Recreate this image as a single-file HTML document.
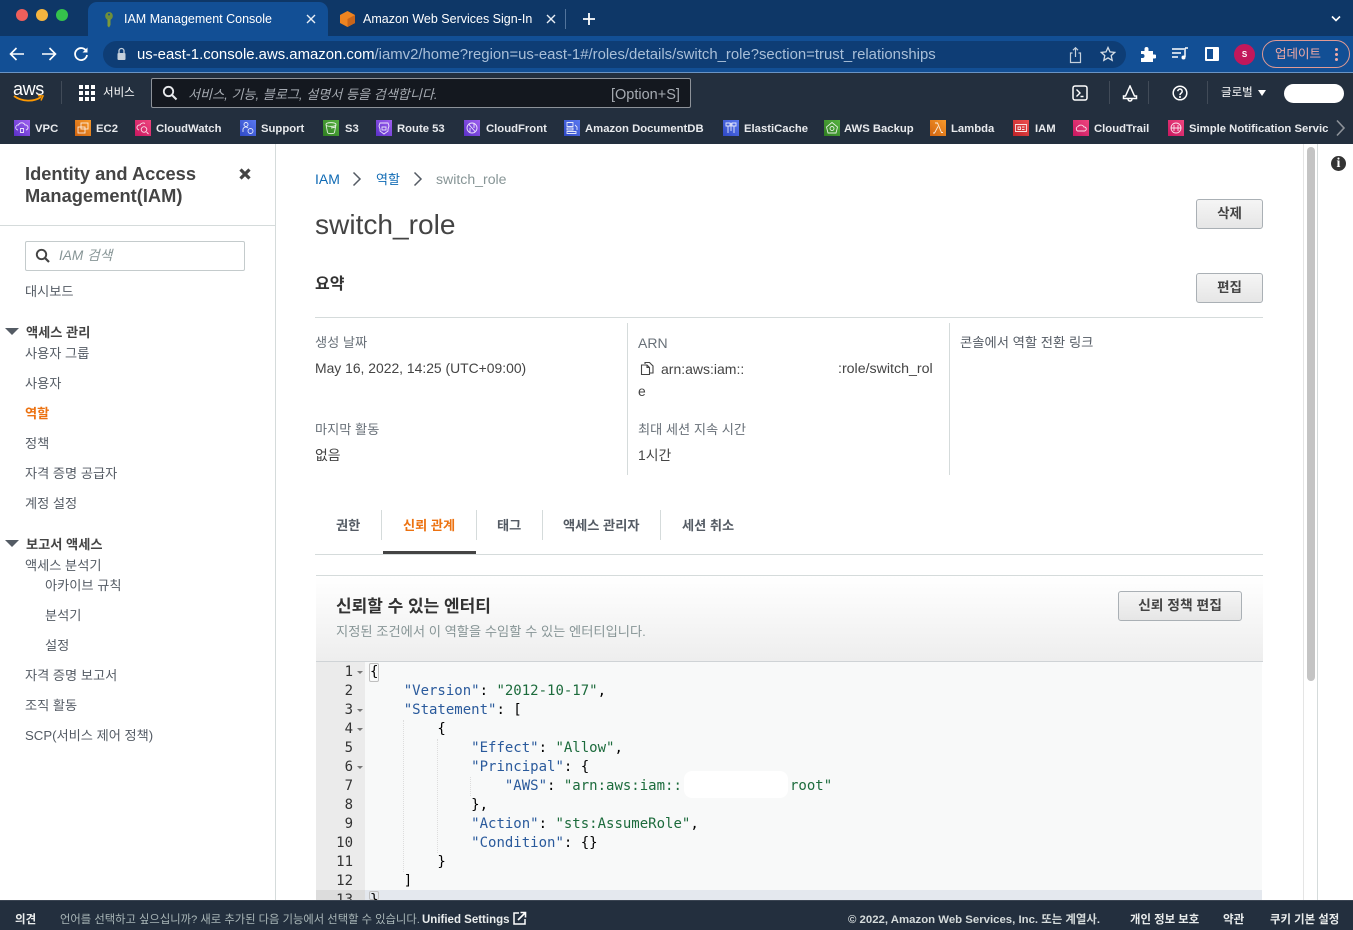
<!DOCTYPE html>
<html lang="ko"><head><meta charset="utf-8"><title>IAM Management Console</title>
<style>
*{box-sizing:border-box}
html,body{margin:0;padding:0;width:1353px;height:930px;overflow:hidden;background:#fff;font-family:"Liberation Sans","Noto Sans CJK KR",sans-serif}
.a{position:absolute}
.t{position:absolute;white-space:nowrap;line-height:20px;font-size:13px;color:#444}
.w{color:#fff}
.bk{position:absolute;top:120px;width:16px;height:16px;display:block}
.bk path,.bk circle,.bk rect.g{fill:none;stroke:#fff;stroke-width:.9;opacity:.85}
.bl{position:absolute;top:121px;line-height:16px;font-size:11.3px;font-weight:bold;color:#e8eaed;white-space:nowrap}
.sep{position:absolute;background:#414b58;width:1px}
.n{position:absolute;left:25px;font-size:13.2px;line-height:20px;color:#545b64;white-space:nowrap}
.btn{position:absolute;background:linear-gradient(#f5f5f5,#e6e6e6);border:1px solid #aab0b5;border-radius:3px;font-size:13.500px;font-weight:bold;color:#444;text-align:center}
.code{position:absolute;font-family:"DejaVu Sans Mono","Liberation Mono",monospace;font-size:14px;line-height:19px;white-space:pre;color:#000}
.k{color:#2a5a9c}.s{color:#1c6b3c}
.ln{position:absolute;left:316px;width:37px;text-align:right;font-family:"DejaVu Sans Mono",monospace;font-size:14px;line-height:19px;color:#333}
.fold{position:absolute;left:357px;width:0;height:0;border:3px solid transparent;border-top:3px solid #777;border-bottom:0}
.tab{position:absolute;top:517px;font-size:13.200px;font-weight:bold;line-height:18px;color:#545b64;white-space:nowrap}
.tsep{position:absolute;top:510px;height:30px;width:1px;background:#d5dbdb}
.lab{position:absolute;font-size:13.200px;line-height:18px;color:#687078;white-space:nowrap}
.val{position:absolute;font-size:13.900px;line-height:18px;color:#444;white-space:nowrap}
</style></head><body>

<!-- Tab strip -->
<div class="a" style="left:0;top:0;width:1353px;height:36px;background:#0e3767"></div>
<div class="a" style="left:16px;top:9px;width:12px;height:12px;border-radius:50%;background:#ee5f5b"></div>
<div class="a" style="left:36px;top:9px;width:12px;height:12px;border-radius:50%;background:#f5b53f"></div>
<div class="a" style="left:56px;top:9px;width:12px;height:12px;border-radius:50%;background:#35c24c"></div>
<div class="a" style="left:88px;top:2px;width:240px;height:34px;background:#124f95;border-radius:9px 9px 0 0"></div>
<svg class="a" style="left:102px;top:11px" width="14" height="17" viewBox="0 0 14 17"><ellipse cx="7" cy="5" rx="3.800" ry="4" fill="#6f8f3a"/><path d="M5.500 8h3v6l-1.500 2.500L5.500 15z" fill="#7c9a3c"/><circle cx="7" cy="3.500" r="1" fill="#124f95"/></svg>
<div class="t w" style="left:124px;top:9px;font-size:12.500px">IAM Management Console</div>
<svg class="a" style="left:306px;top:14px" width="10" height="10" viewBox="0 0 10 10"><path d="M1 1L9 9M9 1L1 9" stroke="#e8eef5" stroke-width="1.400"/></svg>
<svg class="a" style="left:339px;top:10px" width="17" height="18" viewBox="0 0 17 18"><path d="M8.500 1L16 5v8l-7.500 4L1 13V5z" fill="#ee8420"/><path d="M8.500 9L16 5v8l-7.500 4z" fill="#c9651a"/></svg>
<div class="t w" style="left:363px;top:9px;font-size:12.500px">Amazon Web Services Sign-In</div>
<svg class="a" style="left:546px;top:14px" width="10" height="10" viewBox="0 0 10 10"><path d="M1 1L9 9M9 1L1 9" stroke="#e8eef5" stroke-width="1.400"/></svg>
<div class="a" style="left:565px;top:9px;width:1px;height:20px;background:#52749c"></div>
<svg class="a" style="left:582px;top:12px" width="14" height="14" viewBox="0 0 14 14"><path d="M7 1v12M1 7h12" stroke="#fff" stroke-width="1.800"/></svg>
<svg class="a" style="left:1330px;top:15px" width="12" height="8" viewBox="0 0 12 8"><path d="M2 1.500l4 4 4-4" fill="none" stroke="#fff" stroke-width="1.600"/></svg>

<!-- Toolbar -->
<div class="a" style="left:0;top:36px;width:1353px;height:37px;background:#124f95;border-bottom:1px solid #6a94c4"></div>
<svg class="a" style="left:8px;top:45px" width="18" height="18" viewBox="0 0 18 18"><path d="M16 9H3M8.500 3L2.500 9l6 6" fill="none" stroke="#fff" stroke-width="1.600"/></svg>
<svg class="a" style="left:40px;top:45px" width="18" height="18" viewBox="0 0 18 18"><path d="M2 9h13M9.500 3l6 6-6 6" fill="none" stroke="#fff" stroke-width="1.600"/></svg>
<svg class="a" style="left:72px;top:45px" width="18" height="18" viewBox="0 0 18 18"><path d="M14.500 6.500A6 6 0 1 0 15 10" fill="none" stroke="#fff" stroke-width="1.800"/><path d="M15.500 2.500v5h-5z" fill="#fff"/></svg>
<div class="a" style="left:103px;top:41px;width:1023px;height:27px;border-radius:14px;background:#0e3d75"></div>
<svg class="a" style="left:116px;top:47px" width="11" height="14" viewBox="0 0 11 14"><path d="M3 6V4a2.500 2.500 0 0 1 5 0v2" fill="none" stroke="#c5d0dc" stroke-width="1.300"/><rect x="1.500" y="6" width="8" height="7" rx="1" fill="#c5d0dc"/></svg>
<div class="t" style="left:137px;top:45px;font-size:14.900px;color:#fff">us-east-1.console.aws.amazon.com<span style="color:#a9bfd8">/iamv2/home?region=us-east-1#/roles/details/switch_role?section=trust_relationships</span></div>
<svg class="a" style="left:1068px;top:46px" width="15" height="18" viewBox="0 0 15 18"><path d="M4.500 7H2.500v9.500h10V7h-2M7.500 11V2M5 4.200l2.500-2.500L10 4.200" fill="none" stroke="#c5d0dc" stroke-width="1.200"/></svg>
<svg class="a" style="left:1100px;top:46px" width="16" height="16" viewBox="0 0 16 16"><path d="M8 1.500l2 4.400 4.700.5-3.500 3.200 1 4.700L8 11.900l-4.200 2.400 1-4.700L1.300 6.400 6 5.900z" fill="none" stroke="#d5dde6" stroke-width="1.300"/></svg>
<svg class="a" style="left:1140px;top:46px" width="16" height="16" viewBox="0 0 16 16"><path d="M1 5h3.500V3a2 2 0 0 1 4 0v2H13v3.500h1.500a2 2 0 0 1 0 4H13V16H1v-4h1.500a2 2 0 0 0 0-4H1z" fill="#fff"/></svg>
<svg class="a" style="left:1172px;top:47px" width="16" height="14" viewBox="0 0 16 14"><path d="M0 2h12M0 6h9M0 10h6" stroke="#fff" stroke-width="1.500"/><path d="M13 1v9" stroke="#fff" stroke-width="1.500"/><circle cx="11.500" cy="10.500" r="2" fill="#fff"/><path d="M13 1h3" stroke="#fff" stroke-width="1.500"/></svg>
<svg class="a" style="left:1205px;top:47px" width="14" height="14" viewBox="0 0 14 14"><rect x="0" y="0" width="14" height="14" rx="1" fill="#fff"/><rect x="2" y="2" width="6" height="10" fill="#124f95"/></svg>
<div class="a" style="left:1234px;top:44px;width:21px;height:21px;border-radius:50%;background:#c2185b;color:#fff;font-size:8px;font-weight:bold;text-align:center;line-height:21px">S</div>
<div class="a" style="left:1262px;top:40px;width:88px;height:28px;border-radius:14px;border:1px solid #e09a94;background:#124f95"></div>
<div class="t" style="left:1275px;top:44px;font-size:12.500px;color:#f2aba6">업데이트</div>
<div class="a" style="left:1335px;top:48px;width:3px;height:3px;border-radius:50%;background:#f2aba6;box-shadow:0 5px 0 #f2aba6,0 10px 0 #f2aba6"></div>

<!-- AWS nav -->
<div class="a" style="left:0;top:73px;width:1353px;height:71px;background:#232f3e"></div>
<div class="t w" style="left:13px;top:79px;font-size:18px;letter-spacing:-.4px">aws</div>
<svg class="a" style="left:12px;top:94px" width="34" height="10" viewBox="0 0 34 10"><path d="M2 2c8 6 20 6 27 1" fill="none" stroke="#f90" stroke-width="1.800"/><path d="M26 1.500l5 .5-2 4.500" fill="none" stroke="#f90" stroke-width="1.500"/></svg>
<div class="sep" style="left:61px;top:81px;height:23px"></div>
<div class="a" style="left:79px;top:85px;width:4px;height:4px;background:#fff;box-shadow:6px 0 #fff,12px 0 #fff,0 6px #fff,6px 6px #fff,12px 6px #fff,0 12px #fff,6px 12px #fff,12px 12px #fff"></div>
<div class="t w" style="left:103px;top:83px;font-size:11.500px">서비스</div>
<div class="a" style="left:151px;top:78px;width:540px;height:30px;background:#14181f;border:1px solid #8d9299;border-radius:2px"></div>
<svg class="a" style="left:162px;top:85px" width="16" height="16" viewBox="0 0 16 16"><circle cx="6.500" cy="6.500" r="4.700" fill="none" stroke="#e8eaed" stroke-width="1.800"/><path d="M10 10l4.500 4.500" stroke="#e8eaed" stroke-width="2"/></svg>
<div class="t" style="left:188px;top:85px;font-size:13.100px;font-style:italic;color:#a6abb2">서비스, 기능, 블로그, 설명서 등을 검색합니다.</div>
<div class="t" style="left:611px;top:85px;font-size:14.500px;color:#a6abb2">[Option+S]</div>
<svg class="a" style="left:1072px;top:85px" width="16" height="16" viewBox="0 0 16 16"><rect x="1" y="1" width="14" height="14" rx="2" fill="none" stroke="#fff" stroke-width="1.500"/><path d="M4.500 4.500L8 8l-3.500 3.500M8.500 11.500h3" fill="none" stroke="#fff" stroke-width="1.400"/></svg>
<div class="sep" style="left:1109px;top:81px;height:23px"></div>
<svg class="a" style="left:1122px;top:85px" width="16" height="17" viewBox="0 0 16 17"><path d="M8 1L3.500 11H1.500v2.500h13V11h-2zM6 14a2 2 0 0 0 4 0" fill="none" stroke="#fff" stroke-width="1.500"/></svg>
<div class="sep" style="left:1148px;top:81px;height:23px"></div>
<svg class="a" style="left:1172px;top:85px" width="16" height="16" viewBox="0 0 16 16"><circle cx="8" cy="8" r="6.800" fill="none" stroke="#fff" stroke-width="1.500"/><path d="M5.800 6.200a2.200 2.200 0 1 1 3.400 1.900c-.8.500-1.200 1-1.200 2" fill="none" stroke="#fff" stroke-width="1.500"/><circle cx="8" cy="12" r="1" fill="#fff"/></svg>
<div class="sep" style="left:1207px;top:81px;height:23px"></div>
<div class="t w" style="left:1221px;top:83px;font-size:11.500px">글로벌</div>
<div class="a" style="left:1258px;top:90px;width:0;height:0;border:4.500px solid transparent;border-top:6px solid #fff;border-bottom:0"></div>
<div class="a" style="left:1284px;top:84px;width:60px;height:19px;border-radius:10px;background:#fff"></div>

<!-- Bookmarks -->
<svg class="bk" style="left:14px;background:linear-gradient(45deg,#5a30c8,#a060f0)" viewBox="0 0 16 16"><path d="M4 10a2.500 2.500 0 0 1 .5-5 3.500 3.500 0 0 1 6.500 0 2.500 2.500 0 0 1 1 5M6.500 8.500h3v4h-3z"/></svg><div class="bl" style="left:35px">VPC</div>
<svg class="bk" style="left:75px;background:linear-gradient(45deg,#d0620f,#f79a2c)" viewBox="0 0 16 16"><rect class="g" x="6" y="3" width="7" height="6"/><rect class="g" x="3" y="7" width="7" height="6"/></svg><div class="bl" style="left:96px">EC2</div>
<svg class="bk" style="left:135px;background:linear-gradient(45deg,#c8175f,#f0457f)" viewBox="0 0 16 16"><path d="M4 10a2.500 2.500 0 0 1 1-5 3.500 3.500 0 0 1 5-1.500M11.500 12l2 2"/><circle cx="9" cy="9.500" r="2.800"/></svg><div class="bl" style="left:156px">CloudWatch</div>
<svg class="bk" style="left:240px;background:linear-gradient(45deg,#2f49c4,#5a78f0)" viewBox="0 0 16 16"><circle cx="6" cy="4.500" r="2"/><path d="M3 12V9a3 3 0 0 1 5 -1"/><circle cx="10.500" cy="11" r="2.500"/></svg><div class="bl" style="left:261px">Support</div>
<svg class="bk" style="left:323px;background:linear-gradient(45deg,#2f7d22,#56b23f)" viewBox="0 0 16 16"><path d="M3 4.500c0-2.500 10-2.500 10 0l-1.500 8c-.5 1.500-6.500 1.500-7 0zM3 4.500c0 2.500 10 2.500 10 0M8 8l5-1"/></svg><div class="bl" style="left:345px">S3</div>
<svg class="bk" style="left:376px;background:linear-gradient(45deg,#5a30c8,#a060f0)" viewBox="0 0 16 16"><path d="M4 3h8l1 3-1 3 0 2-4 3-4-3V9L3 6zM6 7h4v3H6z"/></svg><div class="bl" style="left:397px">Route 53</div>
<svg class="bk" style="left:464px;background:linear-gradient(45deg,#5a30c8,#a060f0)" viewBox="0 0 16 16"><circle cx="8" cy="8" r="5"/><path d="M5 4.500L11 11.500M6 8v4M10 4v4"/></svg><div class="bl" style="left:486px">CloudFront</div>
<svg class="bk" style="left:564px;background:linear-gradient(45deg,#2f49c4,#5a78f0)" viewBox="0 0 16 16"><path d="M3 2.500h6v4H3zM3 8h6v2H3zM3 11.500h9v2H3zM11 5l2 2v3"/></svg><div class="bl" style="left:585px">Amazon DocumentDB</div>
<svg class="bk" style="left:723px;background:linear-gradient(45deg,#2f49c4,#5a78f0)" viewBox="0 0 16 16"><path d="M3 3h4v3H3zM9 3h4v3H9zM5 6v7M11 6v7M8 3v8"/></svg><div class="bl" style="left:744px">ElastiCache</div>
<svg class="bk" style="left:824px;background:linear-gradient(45deg,#2f7d22,#56b23f)" viewBox="0 0 16 16"><path d="M8 2.500L13.500 7l-1.500 6H4L2.500 7z"/><circle cx="8" cy="8.500" r="2"/></svg><div class="bl" style="left:844px">AWS Backup</div>
<svg class="bk" style="left:930px;background:linear-gradient(45deg,#d0620f,#f79a2c)" viewBox="0 0 16 16"><path d="M5 3h2.500l4 9.500H13M8 6.500L4.500 13H3"/></svg><div class="bl" style="left:951px">Lambda</div>
<svg class="bk" style="left:1013px;background:linear-gradient(45deg,#bf2327,#ee4f4f)" viewBox="0 0 16 16"><path d="M2.500 4.500h11v7h-11zM5 7h2.500v2.500H5zM9 7h2.500M9 9.500h2.500"/></svg><div class="bl" style="left:1035px">IAM</div>
<svg class="bk" style="left:1073px;background:linear-gradient(45deg,#c8175f,#f0457f)" viewBox="0 0 16 16"><path d="M4.500 11a2.500 2.500 0 0 1 .5-4.500 3.500 3.500 0 0 1 6 .5 2 2 0 0 1 .5 4z"/></svg><div class="bl" style="left:1094px">CloudTrail</div>
<svg class="bk" style="left:1168px;background:linear-gradient(45deg,#c8175f,#f0457f)" viewBox="0 0 16 16"><circle cx="8" cy="8" r="5"/><path d="M3 8h10M6 5v6M10 5v6"/></svg><div class="bl" style="left:1189px;width:139px;overflow:hidden">Simple Notification Service</div>
<svg class="a" style="left:1335px;top:119px" width="11" height="18" viewBox="0 0 11 18"><path d="M2 1.500L9 9l-7 7.500" fill="none" stroke="#8d9299" stroke-width="1.600"/></svg>

<!-- Sidebar -->
<div class="a" style="left:275px;top:144px;width:1px;height:756px;background:#d5dbdb"></div>
<div class="t" style="left:25px;top:163px;font-size:18.300px;line-height:22px;font-weight:bold;color:#444">Identity and Access<br>Management(IAM)</div>
<svg class="a" style="left:238px;top:167px" width="14" height="14" viewBox="0 0 14 14"><path d="M2.500 2.500l9 9M11.500 2.500l-9 9" stroke="#444" stroke-width="3.200"/></svg>
<div class="a" style="left:0;top:225px;width:275px;height:1px;background:#d5dbdb"></div>
<div class="a" style="left:25px;top:241px;width:220px;height:30px;border:1px solid #c4cbcc;border-radius:2px"></div>
<svg class="a" style="left:35px;top:248px" width="16" height="16" viewBox="0 0 16 16"><circle cx="6.500" cy="6.500" r="4.700" fill="none" stroke="#444" stroke-width="1.900"/><path d="M10 10l4 4" stroke="#444" stroke-width="2.200"/></svg>
<div class="t" style="left:59px;top:246px;font-size:13.700px;font-style:italic;color:#879596">IAM 검색</div>
<div class="n" style="top:282px">대시보드</div>
<div class="a" style="left:5px;top:328px;width:0;height:0;border:7px solid transparent;border-top:7px solid #545b64;border-bottom:0"></div>
<div class="n" style="top:323px;left:26px;font-weight:bold;color:#444">액세스 관리</div>
<div class="n" style="top:344px">사용자 그룹</div>
<div class="n" style="top:374px">사용자</div>
<div class="n" style="top:404px;color:#ec7211;font-weight:bold">역할</div>
<div class="n" style="top:434px">정책</div>
<div class="n" style="top:464px">자격 증명 공급자</div>
<div class="n" style="top:494px">계정 설정</div>
<div class="a" style="left:5px;top:540px;width:0;height:0;border:7px solid transparent;border-top:7px solid #545b64;border-bottom:0"></div>
<div class="n" style="top:535px;left:26px;font-weight:bold;color:#444">보고서 액세스</div>
<div class="n" style="top:556px">액세스 분석기</div>
<div class="n" style="top:576px;left:45px">아카이브 규칙</div>
<div class="n" style="top:606px;left:45px">분석기</div>
<div class="n" style="top:636px;left:45px">설정</div>
<div class="n" style="top:666px">자격 증명 보고서</div>
<div class="n" style="top:696px">조직 활동</div>
<div class="n" style="top:726px">SCP(서비스 제어 정책)</div>

<!-- Breadcrumb -->
<div class="t" style="left:315px;top:169px;font-size:14px;color:#0f6ab4">IAM</div>
<svg class="a" style="left:352px;top:171px" width="10" height="16" viewBox="0 0 10 16"><path d="M1.500 1.500L8 8l-6.500 6.500" fill="none" stroke="#545b64" stroke-width="1.500"/></svg>
<div class="t" style="left:376px;top:170px;font-size:13px;color:#0f6ab4">역할</div>
<svg class="a" style="left:413px;top:171px" width="10" height="16" viewBox="0 0 10 16"><path d="M1.500 1.500L8 8l-6.500 6.500" fill="none" stroke="#545b64" stroke-width="1.500"/></svg>
<div class="t" style="left:436px;top:169px;font-size:14.100px;color:#879596">switch_role</div>
<div class="t" style="left:315px;top:208px;font-size:28.100px;line-height:34px;color:#444">switch_role</div>
<div class="btn" style="left:1196px;top:199px;width:67px;height:30px;line-height:28px">삭제</div>
<div class="t" style="left:315px;top:275px;font-size:16px;font-weight:bold;color:#333">요약</div>
<div class="btn" style="left:1196px;top:273px;width:67px;height:30px;line-height:28px">편집</div>
<div class="a" style="left:315px;top:317px;width:948px;height:1px;background:#d5dbdb"></div>

<!-- Summary -->
<div class="a" style="left:627px;top:323px;width:1px;height:152px;background:#d5dbdb"></div>
<div class="a" style="left:949px;top:323px;width:1px;height:152px;background:#d5dbdb"></div>
<div class="lab" style="left:315px;top:334px">생성 날짜</div>
<div class="val" style="left:315px;top:359px">May 16, 2022, 14:25 (UTC+09:00)</div>
<div class="lab" style="left:315px;top:421px">마지막 활동</div>
<div class="val" style="left:315px;top:446px">없음</div>
<div class="lab" style="left:638px;top:334px;font-size:14px">ARN</div>
<svg class="a" style="left:640px;top:361px" width="15" height="15" viewBox="0 0 15 15"><path d="M5 3V1.500h4.500l3.500 3.500v7h-3M1.500 4H7l2.500 2.500v7h-8zM7 4v2.500h2.500" fill="none" stroke="#444" stroke-width="1.100"/></svg>
<div class="val" style="left:661px;top:360px;font-size:14px">arn:aws:iam::</div>
<div class="val" style="left:838px;top:360px;font-size:14.200px">:role/switch_rol</div>
<div class="val" style="left:638px;top:382px">e</div>
<div class="lab" style="left:638px;top:421px">최대 세션 지속 시간</div>
<div class="val" style="left:638px;top:446px">1시간</div>
<div class="lab" style="left:960px;top:334px;font-size:13.300px;color:#545b64">콘솔에서 역할 전환 링크</div>

<!-- Tabs -->
<div class="tab" style="left:336px">권한</div>
<div class="tsep" style="left:381px"></div>
<div class="tab" style="left:403px;color:#ec7211">신뢰 관계</div>
<div class="tsep" style="left:476px"></div>
<div class="tab" style="left:497px">태그</div>
<div class="tsep" style="left:542px"></div>
<div class="tab" style="left:563px">액세스 관리자</div>
<div class="tsep" style="left:660px"></div>
<div class="tab" style="left:682px">세션 취소</div>
<div class="a" style="left:315px;top:554px;width:948px;height:1px;background:#d5dbdb"></div>
<div class="a" style="left:383px;top:551px;width:93px;height:3px;background:#444"></div>

<!-- Trust panel -->
<div class="a" style="left:316px;top:575px;width:947px;height:87px;border-top:1px solid #d5dbdb;border-bottom:1px solid #cfd3d6;background:linear-gradient(#fff,#eeeeee)"></div>
<div class="t" style="left:336px;top:596px;font-size:17px;line-height:22px;font-weight:bold;color:#333">신뢰할 수 있는 엔터티</div>
<div class="t" style="left:336px;top:622px;font-size:13.250px;color:#879596">지정된 조건에서 이 역할을 수임할 수 있는 엔터티입니다.</div>
<div class="btn" style="left:1118px;top:591px;width:124px;height:30px;line-height:28px;font-size:13.800px">신뢰 정책 편집</div>

<!-- Editor -->
<div class="a" style="left:316px;top:662px;width:946px;height:238px;background:#f8f9f9"></div>
<div class="a" style="left:316px;top:662px;width:49px;height:238px;background:#ebebeb"></div>
<div class="a" style="left:365px;top:890px;width:897px;height:10px;background:#e4e8ee"></div>
<div class="a" style="left:316px;top:890px;width:49px;height:10px;background:#dcdcdc"></div>
<div class="a" style="left:369px;top:663px;width:10px;height:19px;border:1px solid #bfbfbf;border-radius:2px"></div>
<div class="a" style="left:369px;top:891px;width:10px;height:9px;border:1px solid #bfbfbf;border-radius:2px"></div>
<div class="a" style="left:403px;top:720px;height:152px;border-left:1px dotted #ddd"></div>
<div class="a" style="left:437px;top:739px;height:114px;border-left:1px dotted #ddd"></div>
<div class="a" style="left:470px;top:777px;height:19px;border-left:1px dotted #ddd"></div>

<div class="ln" style="top:663px">1</div><div class="ln" style="top:682px">2</div><div class="ln" style="top:701px">3</div><div class="ln" style="top:720px">4</div><div class="ln" style="top:739px">5</div><div class="ln" style="top:758px">6</div><div class="ln" style="top:777px">7</div><div class="ln" style="top:796px">8</div><div class="ln" style="top:815px">9</div><div class="ln" style="top:834px">10</div><div class="ln" style="top:853px">11</div><div class="ln" style="top:872px">12</div><div class="ln" style="top:891px">13</div>
<div class="fold" style="top:671px"></div><div class="fold" style="top:709px"></div><div class="fold" style="top:728px"></div><div class="fold" style="top:766px"></div>

<div class="code" style="left:370px;top:663px">{
    <span class="k">"Version"</span>: <span class="s">"2012-10-17"</span>,
    <span class="k">"Statement"</span>: [
        {
            <span class="k">"Effect"</span>: <span class="s">"Allow"</span>,
            <span class="k">"Principal"</span>: {
                <span class="k">"AWS"</span>: <span class="s">"arn:aws:iam::</span>
            },
            <span class="k">"Action"</span>: <span class="s">"sts:AssumeRole"</span>,
            <span class="k">"Condition"</span>: {}
        }
    ]
}</div>
<div class="a" style="left:684px;top:771px;width:104px;height:27px;border-radius:8px;background:#fff"></div>
<div class="code s" style="left:790px;top:777px">root"</div>

<!-- Right rail -->
<div class="a" style="left:1303px;top:144px;width:1px;height:756px;background:#e5e5e5"></div>
<div class="a" style="left:1317px;top:144px;width:1px;height:756px;background:#d5dbdb"></div>
<div class="a" style="left:1307px;top:147px;width:8px;height:534px;border-radius:4px;background:#c4c4c4"></div>
<div class="a" style="left:1331px;top:156px;width:15px;height:15px;border-radius:50%;background:#333;color:#fff;font:bold 14px/15px 'Liberation Serif',serif;text-align:center">i</div>

<!-- Footer -->
<div class="a" style="left:0;top:900px;width:1353px;height:30px;background:#232f3e;border-top:1px solid #3a4452"></div>
<div class="t" style="left:15px;top:910px;font-size:11.500px;font-weight:bold;color:#eaeded">의견</div>
<div class="t" style="left:60px;top:910px;font-size:11.300px;color:#aab7b8">언어를 선택하고 싶으십니까? 새로 추가된 다음 기능에서 선택할 수 있습니다.</div>
<div class="t" style="left:422px;top:910px;font-size:11.500px;font-weight:bold;color:#eaeded">Unified Settings</div>
<svg class="a" style="left:513px;top:911px" width="14" height="14" viewBox="0 0 14 14"><path d="M6 2H1v11h11V8" fill="none" stroke="#fff" stroke-width="1.500"/><path d="M5 9l7-7M7.500 1.500h5v5" fill="none" stroke="#fff" stroke-width="1.600"/></svg>
<div class="t" style="left:848px;top:910px;font-size:11.400px;font-weight:bold;color:#d5dbdb">© 2022, Amazon Web Services, Inc. 또는 계열사.</div>
<div class="t" style="left:1130px;top:910px;font-size:11.400px;font-weight:bold;color:#eaeded">개인 정보 보호</div>
<div class="t" style="left:1223px;top:910px;font-size:11.500px;font-weight:bold;color:#eaeded">약관</div>
<div class="t" style="left:1270px;top:910px;font-size:11.400px;font-weight:bold;color:#eaeded">쿠키 기본 설정</div>
</body></html>
